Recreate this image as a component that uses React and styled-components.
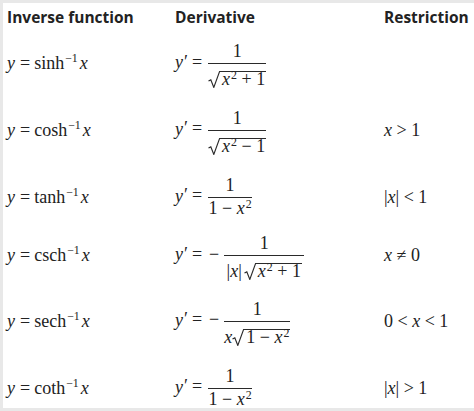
import React from 'react';
import styled, { createGlobalStyle } from 'styled-components';

const GlobalStyle = createGlobalStyle`
  html, body {
    margin: 0;
    padding: 0;
    background: #ffffff;
  }
`;

const Page = styled.div`
  background: #e8e8e8;
  box-sizing: border-box;
  height: 411px;
  padding: 3px 0 3px 3px;
  width: 474px;
`;

const Table = styled.div`
  background: #ffffff;
  color: #222222;
  display: flex;
  flex-direction: column;
  height: 100%;
  overflow: hidden;
  padding-left: 4px;
`;

const Row = styled.div`
  align-items: center;
  box-sizing: border-box;
  display: flex;
  flex: none;
  height: ${(p) => p.$h}px;
  padding-top: ${(p) => p.$pt || 0}px;
`;

const Cell = styled.div`
  flex: none;
  width: ${(p) => (p.$w ? `${p.$w}px` : 'auto')};
`;

const Head = styled(Cell)`
  font-family: 'Open Sans', 'Liberation Sans', sans-serif;
  font-size: 15.5px;
  font-weight: 700;
  white-space: nowrap;
`;

const Math = styled(Cell)`
  font-family: 'Liberation Serif', 'DejaVu Serif', serif;
  font-size: 18px;
  white-space: nowrap;
`;

const I = styled.span`
  font-style: italic;
`;

const Sup = styled.sup`
  font-size: 0.66em;
  line-height: 0;
  margin-left: 1px;
  vertical-align: ${(p) => p.$up ?? 7}px;
`;

const Op = styled.span`
  margin: 0 ${(p) => p.$r ?? 4}px 0 ${(p) => p.$l ?? 5}px;
`;

const Prime = styled.span`
  margin-left: 1px;
`;

const Minus = styled.span`
  margin-left: 3px;
`;

const Frac = styled.span`
  display: inline-flex;
  flex-direction: column;
  margin-left: ${(p) => p.$ml ?? 2}px;
  vertical-align: middle;
`;

const Num = styled.span`
  box-sizing: border-box;
  display: block;
  height: 23px;
  line-height: 17px;
  padding-top: 3px;
  text-align: center;
`;

const Bar = styled.span`
  background: #2a2a2a;
  display: block;
  height: 1px;
  width: ${(p) => p.$w}px;
`;

const Den = styled.span`
  align-items: flex-start;
  box-sizing: border-box;
  display: flex;
  height: 23px;
  justify-content: center;
  line-height: 17px;
  padding-top: ${(p) => p.$pt ?? 7}px;
`;

const Term = styled.span`
  margin-right: ${(p) => p.$mr ?? 0}px;
  white-space: pre;
`;

const Root = styled.span`
  align-items: flex-start;
  display: inline-flex;
`;

const RootSign = styled.svg`
  display: block;
  flex: none;
`;

const Radicand = styled.span`
  border-top: 1px solid #2a2a2a;
  line-height: 15px;
  padding: 0 1px 0 2px;
  white-space: pre;
`;

const Sqrt = ({ children }) => (
  <Root>
    <RootSign width="12" height="17" viewBox="0 0 12 17">
      <path d="M0.5 10 L2.8 8.9 L5.8 16.4 L11.6 0.5 L12 0.5" fill="none" stroke="#2a2a2a" strokeWidth="1.15" />
    </RootSign>
    <Radicand>{children}</Radicand>
  </Root>
);

const Fn = ({ name }) => (
  <Math $w={168}>
    <I>y</I>
    <Op>=</Op>
    {name}
    <Sup>−1</Sup>
    <I style={{ marginLeft: 2 }}>x</I>
  </Math>
);

const Lhs = () => (
  <>
    <I>y</I>
    <Prime>′</Prime>
    <Op $l={4} $r={4}>=</Op>
  </>
);

const X2 = () => (
  <>
    <I>x</I>
    <Sup $up={6}>2</Sup>
  </>
);

const rows = [
  {
    name: 'sinh',
    h: 65,
    deriv: (
      <>
        <Lhs />
        <Frac>
          <Num>1</Num>
          <Bar $w={58} />
          <Den>
            <Sqrt>
              <X2 />{' + 1'}
            </Sqrt>
          </Den>
        </Frac>
      </>
    ),
    cond: null,
  },
  {
    name: 'cosh',
    h: 68,
    deriv: (
      <>
        <Lhs />
        <Frac>
          <Num>1</Num>
          <Bar $w={58} />
          <Den>
            <Sqrt>
              <X2 />{' − 1'}
            </Sqrt>
          </Den>
        </Frac>
      </>
    ),
    cond: (
      <>
        <I>x</I>{' > 1'}
      </>
    ),
  },
  {
    name: 'tanh',
    h: 66,
    deriv: (
      <>
        <Lhs />
        <Frac>
          <Num>1</Num>
          <Bar $w={44} />
          <Den $pt={2}>
            <Term>
              {'1 − '}
              <X2 />
            </Term>
          </Den>
        </Frac>
      </>
    ),
    cond: (
      <>
        |<I>x</I>
        {'| < 1'}
      </>
    ),
  },
  {
    name: 'csch',
    h: 51,
    deriv: (
      <>
        <Lhs />
        <Minus>−</Minus>
        <Frac $ml={5}>
          <Num>1</Num>
          <Bar $w={80} />
          <Den>
            <Term $mr={2}>
              {'|'}
              <I>x</I>
              {'|'}
            </Term>
            <Sqrt>
              <X2 />{' + 1'}
            </Sqrt>
          </Den>
        </Frac>
      </>
    ),
    cond: (
      <>
        <I>x</I>{' ≠ 0'}
      </>
    ),
  },
  {
    name: 'sech',
    h: 80,
    deriv: (
      <>
        <Lhs />
        <Minus>−</Minus>
        <Frac $ml={5}>
          <Num>1</Num>
          <Bar $w={66} />
          <Den>
            <Term>
              <I>x</I>
            </Term>
            <Sqrt>
              {'1 − '}
              <X2 />
            </Sqrt>
          </Den>
        </Frac>
      </>
    ),
    cond: (
      <>
        {'0 < '}
        <I>x</I>
        {' < 1'}
      </>
    ),
  },
  {
    name: 'coth',
    h: 47,
    pt: 7,
    deriv: (
      <>
        <Lhs />
        <Frac>
          <Num>1</Num>
          <Bar $w={44} />
          <Den $pt={2}>
            <Term>
              {'1 − '}
              <X2 />
            </Term>
          </Den>
        </Frac>
      </>
    ),
    cond: (
      <>
        |<I>x</I>
        {'| > 1'}
      </>
    ),
  },
];

export default function App() {
  return (
    <Page>
      <GlobalStyle />
      <Table>
        <Row $h={28}>
          <Head $w={168}>Inverse function</Head>
          <Head $w={209}>Derivative</Head>
          <Head>Restriction</Head>
        </Row>
        {rows.map((r) => (
          <Row key={r.name} $h={r.h} $pt={r.pt}>
            <Fn name={r.name} />
            <Math $w={209}>{r.deriv}</Math>
            <Math>{r.cond}</Math>
          </Row>
        ))}
      </Table>
    </Page>
  );
}
